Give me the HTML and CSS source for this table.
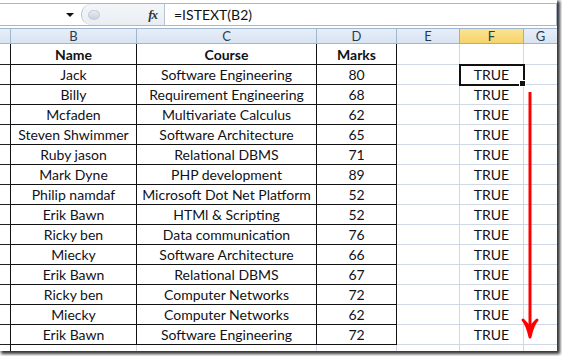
FILE: index.html
```html
<!DOCTYPE html>
<html>
<head>
<meta charset="utf-8">
<link rel="stylesheet" href="styles.css">
</head>
<body>
<div class="shot">
  <div class="fbar">
    <div class="namebox"><span class="dd"></span></div>
    <div class="fxzone"><span class="knob"></span><span class="fx">fx</span></div>
    <div class="formula">=ISTEXT(B2)</div>
  </div>
  <div class="sheet">
    <div class="ch"></div><div class="ch">B</div><div class="ch">C</div><div class="ch">D</div><div class="ch">E</div><div class="ch sel">F</div><div class="ch">G</div>

    <div class="rh first"></div><div class="c t b first">Name</div><div class="c t b first">Course</div><div class="c t b first">Marks</div><div class="c g first"></div><div class="c g first"></div><div class="c g first"></div>

    <div class="rh"></div><div class="c t">Jack</div><div class="c t">Software Engineering</div><div class="c t">80</div><div class="c g"></div><div class="c g active">TRUE<span class="handle"></span></div><div class="c g"></div>
    <div class="rh"></div><div class="c t">Billy</div><div class="c t">Requirement Engineering</div><div class="c t">68</div><div class="c g"></div><div class="c g">TRUE</div><div class="c g"></div>
    <div class="rh"></div><div class="c t">Mcfaden</div><div class="c t">Multivariate Calculus</div><div class="c t">62</div><div class="c g"></div><div class="c g">TRUE</div><div class="c g"></div>
    <div class="rh"></div><div class="c t">Steven Shwimmer</div><div class="c t">Software Architecture</div><div class="c t">65</div><div class="c g"></div><div class="c g">TRUE</div><div class="c g"></div>
    <div class="rh"></div><div class="c t">Ruby jason</div><div class="c t">Relational DBMS</div><div class="c t">71</div><div class="c g"></div><div class="c g">TRUE</div><div class="c g"></div>
    <div class="rh"></div><div class="c t">Mark Dyne</div><div class="c t">PHP development</div><div class="c t">89</div><div class="c g"></div><div class="c g">TRUE</div><div class="c g"></div>
    <div class="rh"></div><div class="c t">Philip namdaf</div><div class="c t">Microsoft Dot Net Platform</div><div class="c t">52</div><div class="c g"></div><div class="c g">TRUE</div><div class="c g"></div>
    <div class="rh"></div><div class="c t">Erik Bawn</div><div class="c t">HTMl &amp; Scripting</div><div class="c t">52</div><div class="c g"></div><div class="c g">TRUE</div><div class="c g"></div>
    <div class="rh"></div><div class="c t">Ricky ben</div><div class="c t">Data communication</div><div class="c t">76</div><div class="c g"></div><div class="c g">TRUE</div><div class="c g"></div>
    <div class="rh"></div><div class="c t">Miecky</div><div class="c t">Software Architecture</div><div class="c t">66</div><div class="c g"></div><div class="c g">TRUE</div><div class="c g"></div>
    <div class="rh"></div><div class="c t">Erik Bawn</div><div class="c t">Relational DBMS</div><div class="c t">67</div><div class="c g"></div><div class="c g">TRUE</div><div class="c g"></div>
    <div class="rh"></div><div class="c t">Ricky ben</div><div class="c t">Computer Networks</div><div class="c t">72</div><div class="c g"></div><div class="c g">TRUE</div><div class="c g"></div>
    <div class="rh"></div><div class="c t">Miecky</div><div class="c t">Computer Networks</div><div class="c t">62</div><div class="c g"></div><div class="c g">TRUE</div><div class="c g"></div>
    <div class="rh"></div><div class="c t">Erik Bawn</div><div class="c t">Software Engineering</div><div class="c t">72</div><div class="c g"></div><div class="c g">TRUE</div><div class="c g"></div>

    <div class="rh last"></div><div class="c g"></div><div class="c g"></div><div class="c g"></div><div class="c g"></div><div class="c g"></div><div class="c g"></div>
  </div>
  <svg class="arrow" width="20" height="250" viewBox="0 0 20 250">
    <line x1="10" y1="0" x2="10" y2="236" stroke="#ff0000" stroke-width="3"/>
    <path d="M3 228 Q7 232 10 245 Q13 232 17 228 Q13 232 10 236 Q7 232 3 228 Z" fill="#ff0000" stroke="#ff0000" stroke-width="3" stroke-linejoin="round"/>
  </svg>
</div>
</body>
</html>
```

FILE: styles.css
```css
html, body {
  margin: 0;
  padding: 0;
  background: #ffffff;
}
body {
  width: 562px;
  height: 356px;
  overflow: hidden;
  font-family: Lato, "Liberation Sans", sans-serif;
  color: #111118;
}
.shot {
  position: relative;
  width: 557px;
  height: 351px;
  overflow: hidden;
  background: #fff;
  box-shadow: 2px 2px 3px 1px #333;
}
.fbar {
  display: flex;
  height: 21px;
  margin-top: 3px;
  border-top: 1px solid #a8b8cc;
  border-bottom: 1px solid #a8b8cc;
}
.namebox {
  width: 81px;
  position: relative;
  display: flex;
  align-items: center;
  justify-content: flex-end;
  padding-right: 7px;
  box-sizing: border-box;
}
.dd {
  width: 0;
  height: 0;
  border-left: 4px solid transparent;
  border-right: 4px solid transparent;
  border-top: 4px solid #111;
  margin-top: 1px;
}
.fxzone {
  width: 84px;
  display: flex;
  align-items: center;
  justify-content: space-between;
  border-left: 1px solid #b9c4d2;
  border-right: 1px solid #b9c4d2;
  border-radius: 10px 0 0 10px;
  background: linear-gradient(#f4f6f9, #e9edf2);
  padding: 0 7px 0 6px;
  box-sizing: border-box;
}
.knob {
  width: 10px;
  height: 8px;
  border-radius: 50%;
  background: linear-gradient(#e9edf2, #c9d1db);
  border: 1px solid #c5cdd8;
}
.fx {
  font-family: "Liberation Serif", serif;
  font-style: italic;
  font-weight: bold;
  font-size: 13px;
  color: #333;
  letter-spacing: -1px;
}
.formula {
  flex: 1;
  padding-left: 9px;
  font-size: 14px;
  line-height: 21px;
  color: #111;
  border-right: 1px solid #a8b8cc;
}
.sheet {
  margin-top: 2px;
  display: grid;
  grid-template-columns: 11px 126px 180px 80px 63px 64px 34px;
  grid-template-rows: 15px 21px repeat(14, 20px) 20px;
  border-top: 1px solid #9eb6ce;
}
.ch {
  box-sizing: border-box;
  border-right: 1px solid #9eb6ce;
  border-bottom: 1px solid #9eb6ce;
  background: linear-gradient(#e6eef8, #d9e4f1);
  color: #2b3a4e;
  font-size: 13px;
  line-height: 14px;
  text-align: center;
}
.ch.sel {
  background: linear-gradient(#fbe394, #f6d36a);
  border-right-color: #e0a640;
  border-bottom-color: #e0a640;
  border-left: 1px solid #e0a640;
  margin-left: -1px;
  color: #2b3a4e;
}
.rh {
  box-sizing: border-box;
  border-right: 1px solid #111;
  border-bottom: 1px solid #222;
}
.rh.last {
  border-bottom: none;
  border-right: 1px solid #111;
}
.c {
  box-sizing: border-box;
  font-size: 14px;
  line-height: 19px;
  text-align: center;
  white-space: nowrap;
  overflow: visible;
}
.c.first {
  line-height: 21px;
}
.c.t {
  border-right: 1px solid #111;
  border-bottom: 1px solid #111;
}
.c.g {
  border-right: 1px solid #d0d7e5;
  border-bottom: 1px solid #d0d7e5;
}
.c.b {
  font-weight: bold;
}
.active {
  position: relative;
  outline: 2px solid #111;
  outline-offset: -1px;
}
.handle {
  position: absolute;
  right: -3px;
  bottom: -3px;
  width: 5px;
  height: 5px;
  background: #111;
  border: 1px solid #fff;
}
.arrow {
  position: absolute;
  left: 520px;
  top: 92px;
}
```
